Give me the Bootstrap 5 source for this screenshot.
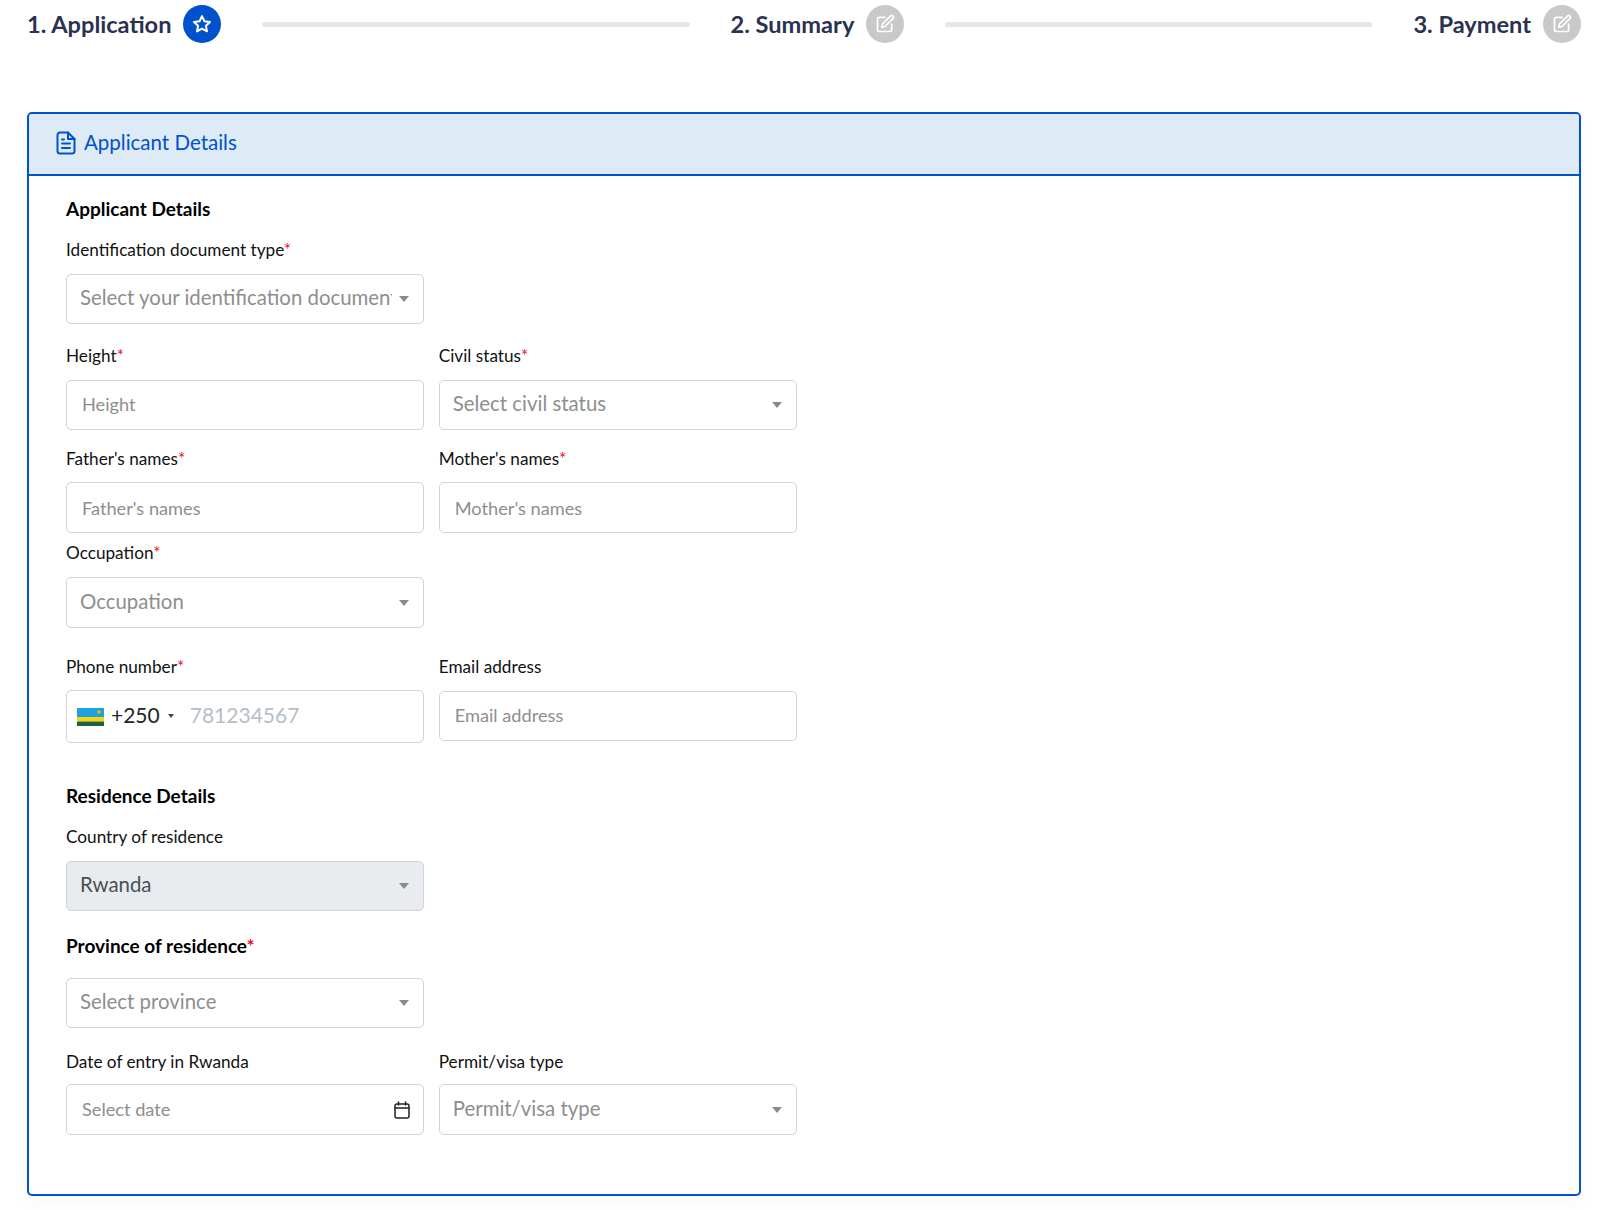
<!DOCTYPE html>
<html lang="en">
<head>
<meta charset="utf-8">
<title>Application</title>
<link href="https://cdn.jsdelivr.net/npm/bootstrap@5.3.0/dist/css/bootstrap.min.css" rel="stylesheet">
<style>
html,body{height:1210px;overflow:hidden;}
body{font-family:"Lato","Open Sans","Liberation Sans",sans-serif;background:#fff;color:#111;padding:0 19px 0 27px;font-size:16px;}
.stepper{height:48px;}
.step-title{font-size:23.6px;font-weight:700;color:#2b3150;line-height:48px;white-space:nowrap;}
.step-dot{width:38px;height:38px;border-radius:50%;background:#c9c9c9;flex:none;margin-left:12px;}
.step-dot.on{background:#0052cc;}
.step-line{height:5px;border-radius:3px;background:#e6e6e6;flex:1 1 0;margin:0 41px;}
.app-card{margin-top:64px;height:1084px;border:2px solid #0052cc;border-radius:5px;overflow:hidden;box-shadow:0 8px 20px rgba(0,0,0,.03);}
.app-head{height:62px;background:#deebf7;border-bottom:2px solid #0052cc;color:#0052cc;font-size:20.5px;padding:0 0 3px 27px;gap:8px;}
.app-body{padding:0 37px;}
.sec-title{font-size:19px;font-weight:700;color:#000;line-height:24px;}
.fld-label{font-size:17.2px;color:#111;line-height:22px;margin:0 0 13px;display:block;}
.fld-label i{color:#e8112d;font-style:normal;}
.fld-label.strong{font-size:19px;font-weight:700;color:#000;margin-bottom:21px;}
.row.tight{--bs-gutter-x:15px;}
.row.tight .tuck{margin-bottom:12px;}
.row.tight .tuck-more{margin-bottom:11px;}
.ctl{height:50px;border:1px solid #ced4da;border-radius:5px;background:#fff;padding:0 15px;color:#8e8e8e;font-size:18.2px;width:100%;box-shadow:none;}
input.ctl{padding-bottom:2px;}
.ctl.tall{height:51px;}
input.ctl.tall{padding-bottom:0;}
.ctl::placeholder{color:#8e8e8e;opacity:1;}
.sel{padding:0 14px 3px 13px;font-size:20.4px;color:#8e8e8e;border-color:#ced4da;}
.sel span{overflow:hidden;white-space:nowrap;flex:1 1 0;min-width:0;}
.caret{width:0;height:0;border-left:5.5px solid transparent;border-right:5.5px solid transparent;border-top:6px solid #8a8a8a;flex:none;margin:3px 0 0 7px;}
.sel.off{background:#e9ecef;color:#495057;}
.phone{height:53px;padding:0 10px 4px;font-size:21px;color:#212529;}
.phone svg{margin-top:4px;}
.phone .code{margin-left:7px;}
.mini{width:0;height:0;border-left:3.5px solid transparent;border-right:3.5px solid transparent;border-top:4px solid #444;margin:2px 16px 0 8px;}
.phone .ph{color:#b5bec6;}
.date-ctl{padding-right:13px;}
.s-24{margin-top:24px;}.s-23{margin-top:23px;}.s-21{margin-top:21px;}.s-18{margin-top:18px;}.s-9{margin-top:9px;}.s-28{margin-top:28px;}.s-41{margin-top:41px;}
</style>
</head>
<body>
<div class="stepper d-flex align-items-center">
  <div class="step-title">1. Application</div>
  <div class="step-dot on d-flex align-items-center justify-content-center">
    <svg width="20" height="20" viewBox="0 0 24 24" fill="none" stroke="#fff" stroke-width="2.4" stroke-linejoin="round"><path d="M12 2.500l2.900 6.200 6.800.8-5 4.600 1.300 6.700L12 17.500l-6 3.300 1.300-6.700-5-4.600 6.800-.8z"/></svg>
  </div>
  <div class="step-line"></div>
  <div class="step-title">2. Summary</div>
  <div class="step-dot d-flex align-items-center justify-content-center">
    <svg width="20" height="20" viewBox="0 0 24 24" fill="none" stroke="#fff" stroke-width="2" stroke-linecap="round" stroke-linejoin="round"><path d="M12 4H5a2 2 0 0 0-2 2v13a2 2 0 0 0 2 2h13a2 2 0 0 0 2-2v-7"/><path d="M18.500 2.500a2.100 2.100 0 0 1 3 3L12 15l-4 1 1-4z"/></svg>
  </div>
  <div class="step-line"></div>
  <div class="step-title">3. Payment</div>
  <div class="step-dot d-flex align-items-center justify-content-center">
    <svg width="20" height="20" viewBox="0 0 24 24" fill="none" stroke="#fff" stroke-width="2" stroke-linecap="round" stroke-linejoin="round"><path d="M12 4H5a2 2 0 0 0-2 2v13a2 2 0 0 0 2 2h13a2 2 0 0 0 2-2v-7"/><path d="M18.500 2.500a2.100 2.100 0 0 1 3 3L12 15l-4 1 1-4z"/></svg>
  </div>
</div>

<div class="app-card">
  <div class="app-head d-flex align-items-center">
    <svg width="20" height="24" viewBox="0 0 20 24" fill="none" stroke="#0052cc" stroke-width="2" stroke-linecap="round" stroke-linejoin="round"><path d="M12 1.500H4a2.500 2.500 0 0 0-2.500 2.500v16A2.500 2.500 0 0 0 4 22.500h12a2.500 2.500 0 0 0 2.500-2.500V8z"/><path d="M12 1.500V8h6.500"/><path d="M6 12.500h8M6 17h8M6 8.500h2"/></svg>
    <span>Applicant Details</span>
  </div>
  <div class="app-body">
    <div class="sec-title s-21">Applicant Details</div>
    <div class="row tight s-18">
      <div class="col-3">
        <label class="fld-label">Identification document type<i>*</i></label>
        <div class="ctl sel d-flex align-items-center"><span>Select your identification document</span><b class="caret"></b></div>
      </div>
    </div>
    <div class="row tight s-21">
      <div class="col-3">
        <label class="fld-label">Height<i>*</i></label>
        <input class="ctl d-block" placeholder="Height">
      </div>
      <div class="col-3">
        <label class="fld-label">Civil status<i>*</i></label>
        <div class="ctl sel d-flex align-items-center"><span>Select civil status</span><b class="caret"></b></div>
      </div>
    </div>
    <div class="row tight s-18">
      <div class="col-3">
        <label class="fld-label tuck">Father's names<i>*</i></label>
        <input class="ctl tall d-block" placeholder="Father's names">
      </div>
      <div class="col-3">
        <label class="fld-label tuck">Mother's names<i>*</i></label>
        <input class="ctl tall d-block" placeholder="Mother's names">
      </div>
    </div>
    <div class="row tight s-9">
      <div class="col-3">
        <label class="fld-label">Occupation<i>*</i></label>
        <div class="ctl tall sel d-flex align-items-center"><span>Occupation</span><b class="caret"></b></div>
      </div>
    </div>
    <div class="row tight s-28">
      <div class="col-3">
        <label class="fld-label tuck">Phone number<i>*</i></label>
        <div class="ctl phone d-flex align-items-center">
          <svg width="27" height="18" viewBox="0 0 27 18"><rect width="27" height="9" fill="#20a0de"/><rect y="9" width="27" height="4.500" fill="#f5d60c"/><rect y="13.500" width="27" height="4.500" fill="#20603d"/><circle cx="22" cy="4" r="1.800" fill="#e5be01"/></svg>
          <span class="code">+250</span><b class="mini"></b><span class="ph">781234567</span>
        </div>
      </div>
      <div class="col-3">
        <label class="fld-label">Email address</label>
        <input class="ctl d-block" placeholder="Email address">
      </div>
    </div>
    <div class="sec-title s-41">Residence Details</div>
    <div class="row tight s-18">
      <div class="col-3">
        <label class="fld-label">Country of residence</label>
        <div class="ctl sel off d-flex align-items-center"><span>Rwanda</span><b class="caret"></b></div>
      </div>
    </div>
    <div class="row tight s-24">
      <div class="col-3">
        <label class="fld-label strong">Province of residence<i>*</i></label>
        <div class="ctl sel d-flex align-items-center"><span>Select province</span><b class="caret"></b></div>
      </div>
    </div>
    <div class="row tight s-23">
      <div class="col-3">
        <label class="fld-label tuck-more">Date of entry in Rwanda</label>
        <div class="ctl tall date-ctl d-flex align-items-center justify-content-between"><span>Select date</span>
          <svg width="16" height="18" viewBox="0 0 16 18" fill="none" stroke="#222" stroke-width="1.500" stroke-linecap="round"><rect x="1" y="3" width="14" height="14" rx="2"/><path d="M1 7h14M4.500 1v3M11.500 1v3"/></svg>
        </div>
      </div>
      <div class="col-3">
        <label class="fld-label tuck-more">Permit/visa type</label>
        <div class="ctl tall sel d-flex align-items-center"><span>Permit/visa type</span><b class="caret"></b></div>
      </div>
    </div>
  </div>
</div>
<script src="https://cdn.jsdelivr.net/npm/bootstrap@5.3.0/dist/js/bootstrap.bundle.min.js"></script>
</body>
</html>
